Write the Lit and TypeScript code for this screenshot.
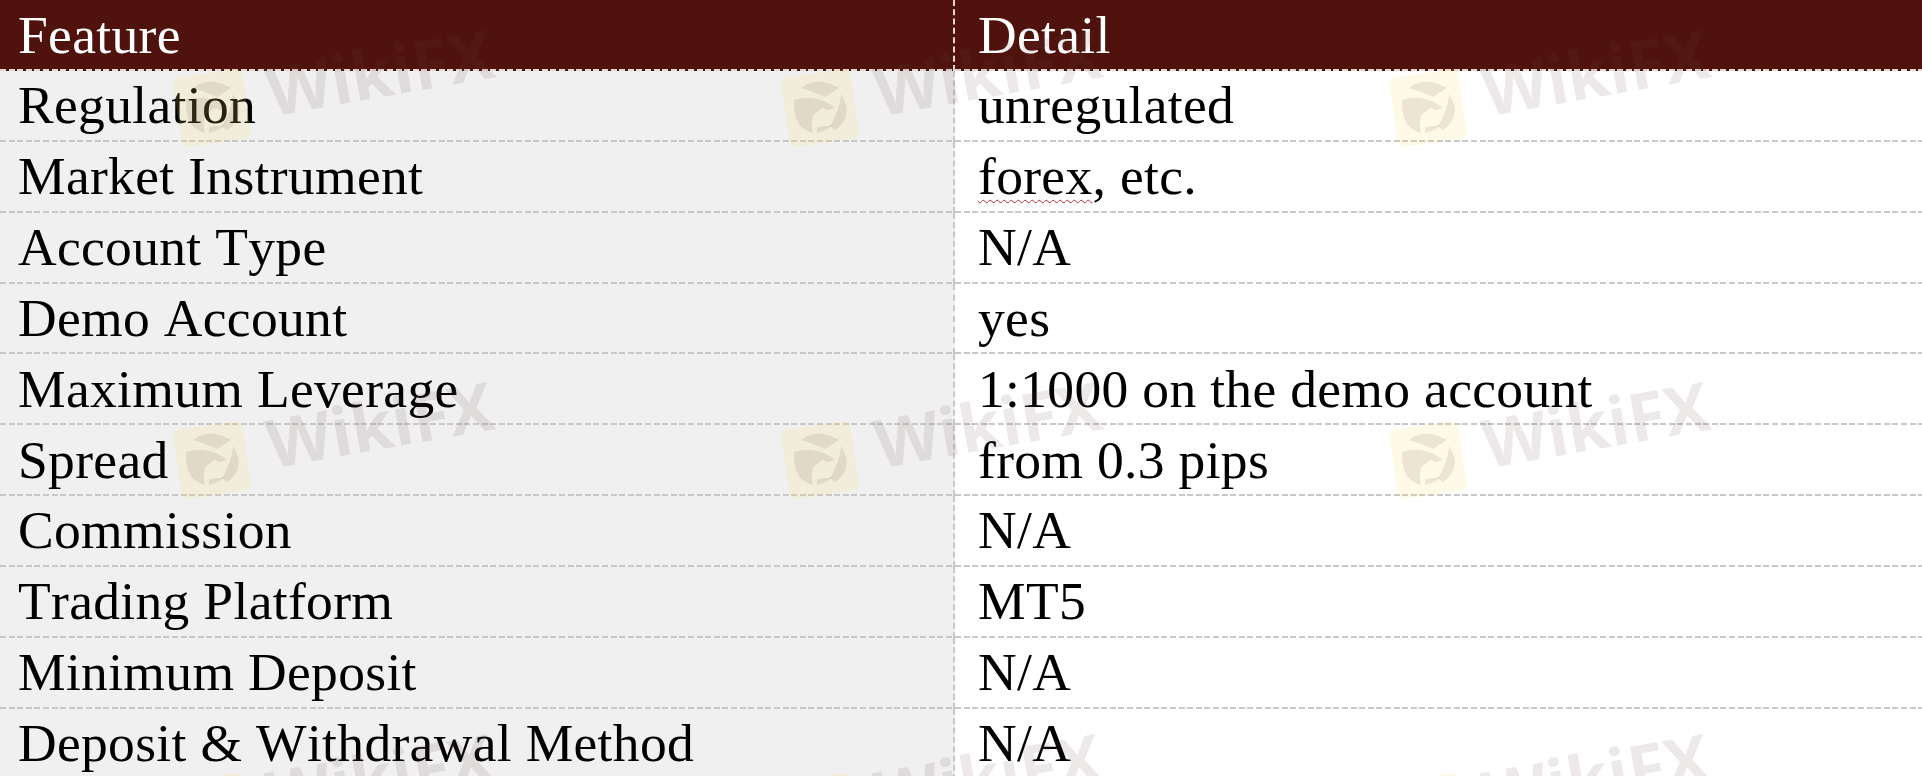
import { LitElement, html, css, svg } from "lit";
import { customElement } from "lit/decorators.js";

const ROWS: [string, string][] = [
  ["Regulation", "unregulated"],
  ["Market Instrument", "forex, etc."],
  ["Account Type", "N/A"],
  ["Demo Account", "yes"],
  ["Maximum Leverage", "1:1000 on the demo account"],
  ["Spread", "from 0.3 pips"],
  ["Commission", "N/A"],
  ["Trading Platform", "MT5"],
  ["Minimum Deposit", "N/A"],
  ["Deposit & Withdrawal Method", "N/A"],
];

const MARKS: { x: number; y: number }[] = [];
for (const y of [58, 410, 762]) for (const x of [164, 772, 1380]) MARKS.push({ x, y });

const eagle = svg`<svg class="logo" viewBox="0 0 100 100">
  <rect x="13" y="15" width="70" height="70" rx="7" transform="rotate(-8 48 50)" fill="#ffe060" fill-opacity=".15"/>
  <g fill="#6e4646" fill-opacity=".12">
    <path d="M22 42 Q30 39 40 40 Q52 41 63 50 L56 52 L50 50 Q46 54 42 56 Q38 62 41 75 Q30 72 26 64 Q21 55 22 42Z"/>
    <path d="M29 30 Q45 17 67 30 L53 39 Q40 33 29 30Z"/>
    <path d="M69 36 Q77 48 74 58 Q70 68 63 72 L58 68 Q68 52 69 36Z"/>
    <path d="M45 69 L61 67 Q55 73 45 75Z"/>
  </g>
</svg>`;

@customElement("app-root")
export class AppRoot extends LitElement {
  static styles = css`
    :host {
      display: block;
      position: relative;
      width: 1922px;
      height: 776px;
      overflow: hidden;
      background: #fff;
      font-family: "Liberation Serif", "Times New Roman", serif;
      font-size: 53.5px;
      color: #000;
      font-kerning: none;
    }
    .table {
      display: grid;
      grid-template-columns: 955px 1fr;
      grid-auto-rows: 70.9px;
    }
    .cell {
      display: flex;
      align-items: center;
      box-sizing: border-box;
      padding: 0 0 1px 18px;
      line-height: 1;
      background: repeating-linear-gradient(90deg, #c8c8c8 0 6px, transparent 6px 8.6px) left bottom / 100% 2px no-repeat;
      white-space: nowrap;
      letter-spacing: 0.33px;
    }
    .cell.key {
      background-color: #f0f0f0;
      border-right: 2px dashed #c8c8c8;
    }
    .cell.val {
      padding-left: 23px;
    }
    .cell.head {
      padding-bottom: 0;
      background: repeating-linear-gradient(90deg, #e6d6d2 0 6px, transparent 6px 8.6px) left bottom / 100% 2px no-repeat, #4f120c;
      color: #fff;
    }
    .cell.head.key {
      border-right-color: #e6d6d2;
    }
    .squiggle {
      text-decoration: underline wavy #b03030 1px;
      text-underline-offset: 5px;
    }
    .marks {
      position: absolute;
      inset: 0;
      pointer-events: none;
    }
    .mark {
      position: absolute;
      width: 100px;
      height: 100px;
    }
    .logo {
      position: absolute;
      left: 0;
      top: 0;
      width: 100px;
      height: 100px;
    }
    .word {
      position: absolute;
      left: 103px;
      top: 0;
      font-family: "Open Sans", sans-serif;
      font-weight: 700;
      font-size: 67px;
      line-height: 1;
      color: rgba(110, 70, 70, 0.12);
      transform: rotate(-10deg);
      transform-origin: left center;
    }
  `;

  private renderValue(v: string) {
    return v === "forex, etc."
      ? html`<span><span class="squiggle">forex</span>, etc.</span>`
      : html`<span>${v}</span>`;
  }

  render() {
    return html`
      <div class="table">
        <div class="cell key head"><span>Feature</span></div>
        <div class="cell val head"><span>Detail</span></div>
        ${ROWS.map(
          ([k, v]) => html`
            <div class="cell key"><span>${k}</span></div>
            <div class="cell val">${this.renderValue(v)}</div>
          `
        )}
      </div>
      <div class="marks">
        ${MARKS.map(
          (m) => html`<div class="mark" style="left:${m.x}px;top:${m.y}px">
            ${eagle}<span class="word">WikiFX</span>
          </div>`
        )}
      </div>
    `;
  }
}
